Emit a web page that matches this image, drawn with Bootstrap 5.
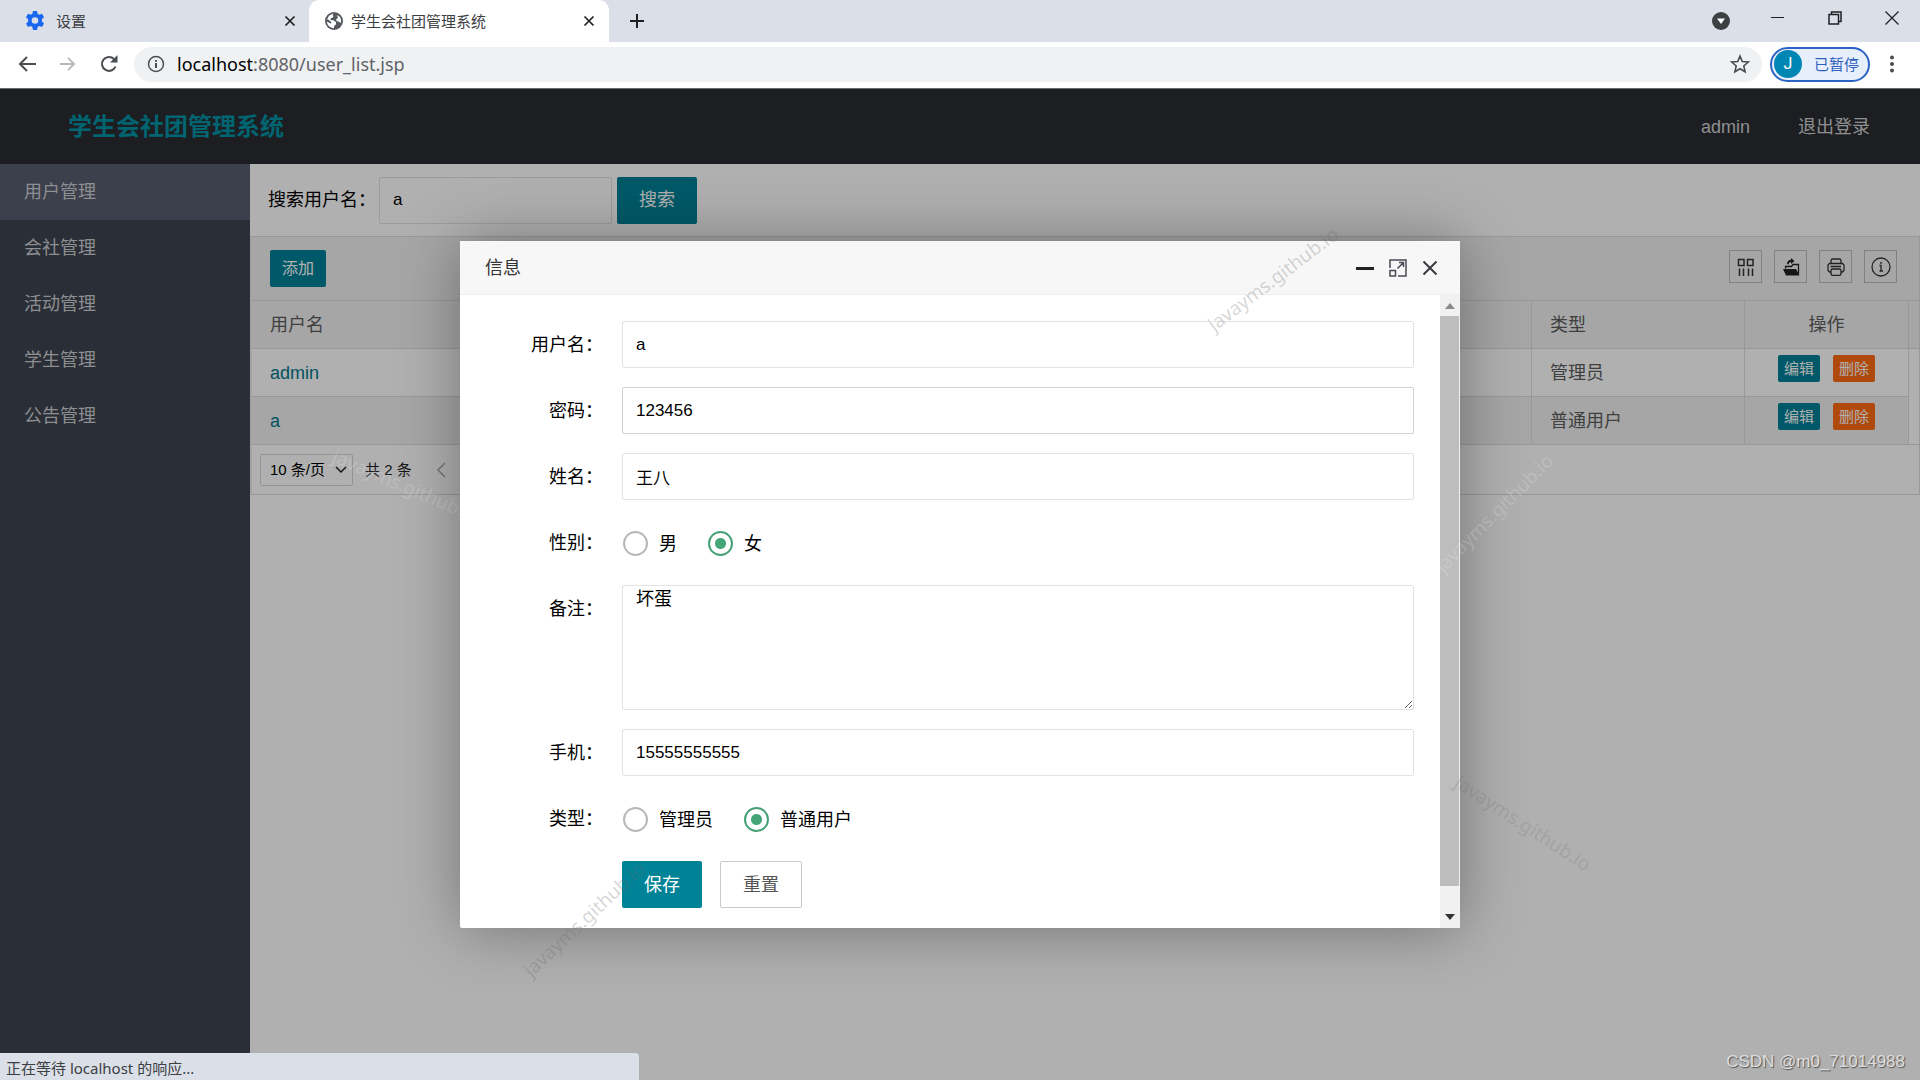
<!DOCTYPE html>
<html lang="zh-CN">
<head>
<meta charset="utf-8">
<meta name="viewport" content="width=device-width, initial-scale=1">
<title>学生会社团管理系统</title>
<link href="https://cdn.jsdelivr.net/npm/bootstrap@5.3.0/dist/css/bootstrap.min.css" rel="stylesheet">
<style>
  :root { --ui: "Liberation Sans", "Noto Sans CJK SC", sans-serif; --chrome: "Noto Sans", "Noto Sans CJK SC", sans-serif; --teal: #008297; }
  body { font: 18px/24px var(--ui); color: #000; min-height: 100vh; overflow: hidden; }
  a { text-decoration: none; }
  svg { display: block; flex: none; }
  .plain-btn { border: 0; background: none; padding: 0; color: #202124; display: flex; align-items: center; justify-content: center; }

  .tab-strip { background: #dbdfe7; height: 42px; font: 15px/20px var(--chrome); color: #3c4043; }
  .tab-strip .tab-item { width: 300px; padding: 0 13px 0 16px; height: 42px; }
  .tab-strip .tab-first { width: 309px; padding-left: 26px; padding-right: 12px; }
  .tab-strip .tab-item.on { background: #fff; border-radius: 10px 10px 0 0; }
  .win { width: 57px; height: 42px; }
  .win-slim { padding-bottom: 6px; }
  .address-row { background: #fff; height: 47px; padding: 0 18px 2px; border-bottom: 1px solid #6b6d70; }
  .address-pill { background: #f0f1f3; border-radius: 18px; height: 35px; padding: 0 12px 0 13px; }
  .url-host { color: #000; }
  .url-line { font: 18px/24px var(--chrome); color: #5f6368; }
  .profile-pill { height: 35px; border: 2px solid #2b63c4; background: #e8effc; border-radius: 18px; font: 15px/20px var(--chrome); color: #2f62bd; padding: 0 9px 0 2px; }
  .profile-pill .face { width: 28px; height: 28px; border-radius: 50%; background: #0086b3; color: #fff; font: 16px/28px Roboto, sans-serif; text-align: center; }

  .top-bar { background: #292c32; height: 75px; padding: 0 50px 0 68px; }
  .top-bar .brand { color: #0093a2; font-size: 24px; font-weight: 700; }
  .top-bar .nav-link { color: #cfcfd0; padding: 0; }
  .side-bar { width: 250px; background: #3d434f; }
  .side-bar a { height: 56px; padding: 0 24px; color: #cdced2; display: flex; align-items: center; }
  .side-bar a.on { background: #585d6e; }

  .text-box { border: 1px solid #e3e3e3; border-radius: 2px; background: #fff; height: 47px; padding: 0 13px; color: #000; font: 17px/24px var(--ui); outline: 0; }
  .text-box.strong { border-color: #d2d2d2; }
  .act { border: 0; border-radius: 2px; color: #fff; background: var(--teal); height: 47px; padding: 0 22px; font: 18px/24px var(--ui); }
  .act-ghost { background: #fff; color: #555; border: 1px solid #c9c9c9; }
  .act-sm { height: 37px; padding: 0 12px; font-size: 16px; }
  .act-xs { height: 27px; padding: 0 6px; font-size: 15px; line-height: 24px; }
  .act-del { background: #ff6a12; }
  .op-pair { gap: 13px; }
  .search-row { padding: 12px 18px; height: 72px; gap: 3px; }
  .search-row .text-box { width: 233px; margin-right: 2px; }

  .grid-panel { border: 1px solid #dcdcdc; border-left: 2px solid #ececec; }
  .grid-tools { background: #f1f1f1; height: 64px; padding: 0 22px 4px 18px; border-bottom: 1px solid #dcdcdc; }
  .grid-tools .act { margin-top: 4px; }
  .tool-set { gap: 12px; }
  .tool-box { width: 33px; height: 33px; border: 1px solid #bcbcbc; }
  .user-grid { table-layout: fixed; width: 100%; color: #5c5c5c; border-collapse: separate; border-spacing: 0; }
  .user-grid th, .user-grid td { height: 48px; padding: 0 18px; font-weight: 400; border-right: 1px solid #dcdcdc; border-bottom: 1px solid #dcdcdc; }
  .user-grid tr > :last-child { padding: 0; border-right: 0; }
  .user-grid thead, .user-grid tr.alt { background: #f1f1f1; }
  .user-grid td a { color: #01798a; }
  .user-grid td.ops { padding-bottom: 8px; }
  .user-grid td.gutter { border-bottom: 0; background: #fff; }
  .user-grid tr.alt td.gutter { border-bottom: 1px solid #dcdcdc; }
  .pager { height: 49px; padding: 0 8px; font-size: 15px; color: #222; }
  .pager select { width: 93px; height: 32px; border: 1px solid #d6d6d6; border-radius: 2px; padding: 0 20px 0 9px; appearance: none; background: transparent; font: 15px/20px var(--ui); color: #000; }
  .pager .drop-mark { position: absolute; right: 6px; top: 12px; pointer-events: none; }

  .veil { position: absolute; inset: 0; background: rgba(0,0,0,.31); display: flex; align-items: center; justify-content: center; }
  .dialog-box { width: 1000px; max-width: 100%; background: #fff; border-radius: 2px; box-shadow: 1px 1px 62px rgba(0,0,0,.35); }
  .dialog-head { background: #f7f7f7; height: 54px; padding: 0 22px 0 25px; border-bottom: 1px solid #eee; color: #333; }
  .dialog-tools { gap: 15px; }
  .dialog-form { padding: 26px 26px 20px 0; }
  .form-line { margin-bottom: 19px; min-height: 47px; }
  .form-line > .caption { width: 162px; padding: 12px 19px 0 0; text-align: right; flex: none; }
  .form-line .text-box { width: 100%; }
  .form-line textarea.text-box { height: 125px; display: block; padding-top: 1px; font-size: 18px; }
  .form-actions { gap: 18px; }
  .pick { margin: 2px 30px 0 1px; gap: 11px; }
  .pick input { appearance: none; width: 25px; height: 25px; border: 2px solid #b8b8b8; border-radius: 50%; margin: 0; background: #fff; }
  .pick input:checked { border-color: #46a077; background: radial-gradient(circle, #46a577 5px, #fff 6px); }
  .scroll-rail { width: 20px; background: #f1f1f1; padding-right: 1px; }
  .scroll-rail .thumb { background: #bdbdbd; }
  .rail-end { height: 21px; }
  .rail-foot { height: 42px; padding-bottom: 8px; }

  .status-bubble { position: absolute; left: 0; bottom: 0; width: 639px; height: 27px; background: #dbdfe7; border-radius: 0 4px 0 0; font: 15px/20px var(--chrome); color: #3c4043; padding: 5px 6px 0; }
  .stamp { position: absolute; font: 19px/24px var(--chrome); white-space: nowrap; pointer-events: none; transform: translate(-50%, -50%) rotate(var(--turn)); color: rgba(110,110,110,.28); }
  .stamp.pale { color: rgba(255,255,255,.18); }
  .stamp.s1 { left: 1273px; top: 190px; --turn: -37deg; }
  .stamp.s2 { left: 584px; top: 830px; --turn: -43deg; }
  .stamp.s3 { left: 406px; top: 397px; --turn: 23deg; }
  .stamp.s4 { left: 1494px; top: 424px; --turn: -45deg; }
  .stamp.s5 { left: 1523px; top: 734px; --turn: 33deg; color: rgba(90,90,90,.18); }
  .credit { position: absolute; right: 15px; bottom: 6px; font: 17px/24px var(--ui); color: #dedede; text-shadow: 1px 1px 1px #555; }
</style>
<script src="https://cdn.jsdelivr.net/npm/bootstrap@5.3.0/dist/js/bootstrap.bundle.min.js"></script>
</head>
<body class="d-flex flex-column vh-100">

<!-- browser tabs -->
<div class="tab-strip d-flex align-items-center">
  <div class="tab-item tab-first d-flex align-items-center">
    <svg width="18" height="20" viewBox="0 0 18 20" class="me-2"><path fill="#1a68f0" fill-rule="evenodd" d="M7 0h4l.6 2.800 1.700 1 2.700-1 2 3.500-2.100 1.900v2.400l2.100 1.900-2 3.500-2.700-1-1.700 1L11 19H7l-.6-2.900-1.700-1-2.700 1-2-3.500 2.100-1.900V8.200L0 6.300l2-3.500 2.700 1 1.700-1zM9 6.200a3.300 3.300 0 1 0 0 6.600 3.300 3.300 0 0 0 0-6.600z"/></svg>
    <span class="flex-grow-1 ms-1">设置</span>
    <button class="plain-btn" aria-label="关闭标签页"><svg width="14" height="14" viewBox="0 0 14 14" stroke="#202124" stroke-width="1.700"><path d="M2.500 2.500l9 9M11.500 2.500l-9 9"/></svg></button>
  </div>
  <div class="tab-item on d-flex align-items-center">
    <svg width="18" height="18" viewBox="0 0 18 18" class="me-2"><circle cx="9" cy="9" r="9" fill="#55585c"/><path fill="#fff" d="M9.500 1.800c-2 .3-2.200 1.200-1.200 2l-.3 1.700-2 .6-.5 2 3.500.3 2.200 2.200-.5 2.200-1.500 1-.2 2.400C5.200 15.800 2 13.500 2 9.500l3.500 2 1.200-1L4 8 2.300 7.500C3 4 6 1.500 9.500 1.800zM12 3l2.500 1.600C16 6.500 16.400 9 15.800 11l-2.300-1.500-2-.5-.3-2 1.800-1z"/></svg>
    <span class="flex-grow-1">学生会社团管理系统</span>
    <button class="plain-btn" aria-label="关闭标签页"><svg width="14" height="14" viewBox="0 0 14 14" stroke="#202124" stroke-width="1.700"><path d="M2.500 2.500l9 9M11.500 2.500l-9 9"/></svg></button>
  </div>
  <button class="plain-btn ms-3 ps-1" aria-label="新标签页"><svg width="16" height="16" viewBox="0 0 16 16" stroke="#202124" stroke-width="2"><path d="M8 1v14M1 8h14"/></svg></button>
  <div class="ms-auto d-flex align-items-center">
    <button class="plain-btn win" aria-label="搜索标签页"><svg width="18" height="18" viewBox="0 0 18 18"><circle cx="9" cy="9" r="9" fill="#3c4043"/><path d="M5 6.500h8L9 12z" fill="#fff"/></svg></button>
    <button class="plain-btn win win-slim" aria-label="最小化"><svg width="14" height="14" viewBox="0 0 14 14" stroke="#202124"><path d="M0 6.500h13"/></svg></button>
    <button class="plain-btn win win-slim" aria-label="还原"><svg width="14" height="14" viewBox="0 0 14 14" fill="none" stroke="#202124" stroke-width="1.500"><path d="M1 3.500h9.500V13H1zM3.500 3V1H13v9.500h-2"/></svg></button>
    <button class="plain-btn win win-slim" aria-label="关闭"><svg width="14" height="14" viewBox="0 0 14 14" stroke="#202124" stroke-width="1.300"><path d="M.5.5l13 13M13.500.5l-13 13"/></svg></button>
  </div>
</div>

<!-- address row -->
<div class="address-row d-flex align-items-center">
  <button class="plain-btn me-4" aria-label="后退"><svg width="18" height="16" viewBox="0 0 18 16" fill="none" stroke="#4a4d51" stroke-width="2"><path d="M18 8H2M9 1L2 8l7 7"/></svg></button>
  <button class="plain-btn me-4" aria-label="前进"><svg width="16" height="16" viewBox="0 0 18 16" fill="none" stroke="#b5b7ba" stroke-width="2"><path d="M0 8h16M9 1l7 7-7 7"/></svg></button>
  <button class="plain-btn me-3" aria-label="重新加载"><svg width="18" height="18" viewBox="0 0 18 18" fill="none" stroke="#4a4d51" stroke-width="2"><path d="M15.500 11.500A7 7 0 1 1 14 4"/><path d="M17.500 0v7.500H10z" fill="#4a4d51" stroke="none"/></svg></button>
  <div class="address-pill flex-grow-1 d-flex align-items-center">
    <svg width="18" height="18" viewBox="0 0 18 18" class="me-2" fill="none" stroke="#4a4d51" stroke-width="1.500"><circle cx="9" cy="9" r="7.500"/><path d="M9 8v5M9 5v1.800" stroke-width="2"/></svg>
    <span class="url-line flex-grow-1 ms-1"><span class="url-host">localhost</span>:8080/user_list.jsp</span>
    <button class="plain-btn" aria-label="添加书签"><svg width="20" height="20" viewBox="0 0 20 20" fill="none" stroke="#4a4d51" stroke-width="1.600"><path d="M10 2l2.300 5.500 6 .5-4.500 4 1.300 5.800L10 14.700l-5.100 3.100L6.200 12 1.700 8l6-.5z"/></svg></button>
  </div>
  <button class="profile-pill d-flex align-items-center ms-2"><span class="face me-2">J</span><span class="ms-1">已暂停</span></button>
  <button class="plain-btn ms-3 me-1" aria-label="菜单"><svg width="12" height="18" viewBox="0 0 12 18" fill="#4a4d51"><circle cx="6" cy="2.500" r="2"/><circle cx="6" cy="9" r="2"/><circle cx="6" cy="15.500" r="2"/></svg></button>
</div>

<!-- page -->
<div class="position-relative flex-grow-1 d-flex flex-column">
  <header class="top-bar d-flex align-items-center">
    <a href="#" class="brand me-auto">学生会社团管理系统</a>
    <nav class="d-flex"><a class="nav-link me-5" href="#">admin</a><a class="nav-link" href="#">退出登录</a></nav>
  </header>
  <div class="d-flex flex-grow-1">
    <nav class="side-bar flex-shrink-0">
      <a href="#" class="on">用户管理</a><a href="#">会社管理</a><a href="#">活动管理</a><a href="#">学生管理</a><a href="#">公告管理</a>
    </nav>
    <main class="flex-grow-1">
      <form class="search-row d-flex align-items-center">
        <label for="q">搜索用户名：</label>
        <input id="q" class="text-box" value="a">
        <button type="button" class="act">搜索</button>
      </form>
      <section class="grid-panel">
        <div class="grid-tools d-flex align-items-center">
          <button class="act act-sm me-auto">添加</button>
          <div class="d-flex tool-set">
            <button class="plain-btn tool-box" aria-label="筛选列"><svg width="18" height="18" viewBox="0 0 18 18" fill="none" stroke="#333" stroke-width="1.500"><path d="M1.500 1.500h5.500v6H1.500zM10.500 1.500H16v6h-5.500zM2.500 10.500V18M6.500 10.500V18M11.500 10.500V18M15.500 10.500V18"/></svg></button>
            <button class="plain-btn tool-box" aria-label="导出"><svg width="18" height="18" viewBox="0 0 18 18"><path fill="#222" d="M1 11h13l3.500 6.500H4zM5 6c0-3 2-4.200 4-4.200V0l3.500 3L9 6V4C7.500 4 6.800 5 6.500 6.500z"/><path d="M3.500 10.500V8.500h6l1.500-2h5.500V16" fill="none" stroke="#222" stroke-width="1.300"/></svg></button>
            <button class="plain-btn tool-box" aria-label="打印"><svg width="18" height="18" viewBox="0 0 18 18" fill="none" stroke="#333" stroke-width="1.300"><path d="M4 5.500V2.500L5 1h8l1 1.500v3M4 14H2.500L1 12.500V7l1.500-1.500h13L17 7v5.500L15.500 14H14M4 12l1-1h8l1 1v4l-1 1.300H5L4 16zM3.500 8.500H14"/></svg></button>
            <button class="plain-btn tool-box" aria-label="提示"><svg width="20" height="20" viewBox="0 0 20 20" fill="none" stroke="#333" stroke-width="1.300"><circle cx="10" cy="10" r="9"/><path d="M8.500 8.500H10V14M8.500 14h3.500M10 5v2"/></svg></button>
          </div>
        </div>
        <table class="user-grid">
          <colgroup><col><col style="width:213px"><col style="width:164px"><col style="width:10px"></colgroup>
          <thead><tr><th>用户名</th><th>类型</th><th class="text-center">操作</th><th></th></tr></thead>
          <tbody>
            <tr><td><a href="#">admin</a></td><td>管理员</td><td class="ops"><div class="d-flex justify-content-center op-pair"><button class="act act-xs">编辑</button><button class="act act-xs act-del">删除</button></div></td><td class="gutter"></td></tr>
            <tr class="alt"><td><a href="#">a</a></td><td>普通用户</td><td class="ops"><div class="d-flex justify-content-center op-pair"><button class="act act-xs">编辑</button><button class="act act-xs act-del">删除</button></div></td><td class="gutter"></td></tr>
          </tbody>
        </table>
        <div class="pager d-flex align-items-center">
          <div class="position-relative me-2">
            <select aria-label="每页条数"><option>10 条/页</option></select>
            <svg class="drop-mark" width="12" height="8" viewBox="0 0 12 8" fill="none" stroke="#222" stroke-width="1.500"><path d="M1 1l5 5 5-5"/></svg>
          </div>
          <span class="ms-1 me-4">共 2 条</span>
          <button class="plain-btn" aria-label="上一页"><svg width="10" height="16" viewBox="0 0 10 16" fill="none" stroke="#aaa" stroke-width="1.500"><path d="M9 1L2 8l7 7"/></svg></button>
        </div>
      </section>
    </main>
  </div>

  <!-- dialog -->
  <div class="veil">
    <span class="stamp pale s3">javayms.github.io</span>
    <div class="dialog-box position-relative" role="dialog" aria-labelledby="dlg">
      <div class="dialog-head d-flex align-items-center">
        <span id="dlg" class="me-auto">信息</span>
        <div class="d-flex align-items-center dialog-tools">
          <button class="plain-btn" aria-label="最小化"><svg width="18" height="18" viewBox="0 0 18 18"><path d="M0 8h18v3H0z" fill="#222"/></svg></button>
          <button class="plain-btn" aria-label="最大化"><svg width="18" height="18" viewBox="0 0 18 18" fill="none" stroke="#4a4a55" stroke-width="1.500"><path d="M1 9V1h16v16H9M1 11.500h5.500V17H1zM8.500 9.500l6-6M10 3.500h4.500V8"/></svg></button>
          <button class="plain-btn" aria-label="关闭"><svg width="16" height="16" viewBox="0 0 16 16" stroke="#3a3a42" stroke-width="2"><path d="M1.500 1.500l13 13M14.500 1.500l-13 13"/></svg></button>
        </div>
      </div>
      <div class="d-flex">
        <form class="dialog-form flex-grow-1">
          <div class="form-line d-flex"><label class="caption" for="f1">用户名：</label><input id="f1" class="text-box" value="a"></div>
          <div class="form-line d-flex"><label class="caption" for="f2">密码：</label><input id="f2" class="text-box strong" value="123456"></div>
          <div class="form-line d-flex"><label class="caption" for="f3">姓名：</label><input id="f3" class="text-box" value="王八"></div>
          <div class="form-line d-flex"><span class="caption">性别：</span>
            <label class="pick d-flex align-items-center"><input type="radio" name="sex">男</label>
            <label class="pick d-flex align-items-center"><input type="radio" name="sex" checked>女</label></div>
          <div class="form-line d-flex"><label class="caption" for="f4">备注：</label><textarea id="f4" class="text-box">坏蛋</textarea></div>
          <div class="form-line d-flex"><label class="caption" for="f5">手机：</label><input id="f5" class="text-box" value="15555555555"></div>
          <div class="form-line d-flex"><span class="caption">类型：</span>
            <label class="pick d-flex align-items-center"><input type="radio" name="kind">管理员</label>
            <label class="pick d-flex align-items-center"><input type="radio" name="kind" checked>普通用户</label></div>
          <div class="form-line d-flex mb-0"><span class="caption"></span><div class="d-flex form-actions"><button type="button" class="act">保存</button><button type="reset" class="act act-ghost">重置</button></div></div>
        </form>
        <div class="scroll-rail d-flex flex-column">
          <div class="rail-end d-flex align-items-center justify-content-center"><svg width="10" height="6" viewBox="0 0 10 6"><path d="M0 6l5-6 5 6z" fill="#8a8a8a"/></svg></div>
          <div class="thumb flex-grow-1"></div>
          <div class="rail-foot d-flex align-items-end justify-content-center"><svg width="10" height="6" viewBox="0 0 10 6"><path d="M0 0l5 6 5-6z" fill="#333"/></svg></div>
        </div>
      </div>
    </div>
  </div>

  <span class="stamp s1">javayms.github.io</span>
  <span class="stamp s2">javayms.github.io</span>
  <span class="stamp pale s4">javayms.github.io</span>
  <span class="stamp s5">javayms.github.io</span>
  <div class="status-bubble">正在等待 localhost 的响应...</div>
  <span class="credit">CSDN @m0_71014988</span>
</div>
</body>
</html>
